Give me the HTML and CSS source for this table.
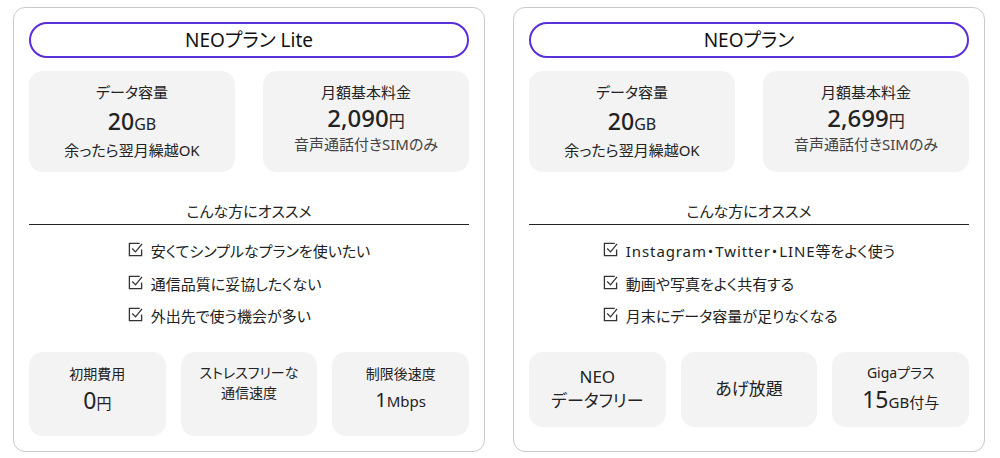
FILE: index.html
```html
<!DOCTYPE html>
<html lang="ja">
<head>
<meta charset="utf-8">
<title>NEOプラン</title>
<link rel="stylesheet" href="styles.css">
</head>
<body>
<svg width="0" height="0" class="defs" aria-hidden="true">
  <symbol id="chk" viewBox="0 0 16 16">
    <path d="M12.5 1.5 H1.5 V14.5 H14.5 V8" fill="none" stroke="#333" stroke-width="1.4"/>
    <path d="M4.5 7 L8 10.5 L15 2" fill="none" stroke="#333" stroke-width="1.4"/>
  </symbol>
</svg>
<main class="plans">
  <section class="card">
    <h2 class="pill">NEOプラン Lite</h2>
    <div class="specs">
      <div class="spec">
        <div class="label">データ容量</div>
        <div class="value"><span class="big">20</span><span class="unit">GB</span></div>
        <div class="sub">余ったら翌月繰越OK</div>
      </div>
      <div class="spec">
        <div class="label">月額基本料金</div>
        <div class="value price"><span class="big">2,090</span><span class="unit">円</span></div>
        <div class="sub gray">音声通話付きSIMのみ</div>
      </div>
    </div>
    <h3 class="rec">こんな方にオススメ</h3>
    <div class="list-wrap">
      <ul class="checks">
        <li><svg class="ico"><use href="#chk"/></svg>安くてシンプルなプランを使いたい</li>
        <li><svg class="ico"><use href="#chk"/></svg>通信品質に妥協したくない</li>
        <li><svg class="ico"><use href="#chk"/></svg>外出先で使う機会が多い</li>
      </ul>
    </div>
    <div class="feats feats-top">
      <div class="feat">
        <div class="flabel">初期費用</div>
        <div class="fvalue"><span class="fbig">0</span><span class="funit">円</span></div>
      </div>
      <div class="feat">
        <div class="ftext">ストレスフリーな</div>
        <div class="ftext">通信速度</div>
      </div>
      <div class="feat">
        <div class="flabel">制限後速度</div>
        <div class="fvalue"><span class="fbig mid">1</span><span class="funit">Mbps</span></div>
      </div>
    </div>
  </section>

  <section class="card">
    <h2 class="pill">NEOプラン</h2>
    <div class="specs">
      <div class="spec">
        <div class="label">データ容量</div>
        <div class="value"><span class="big">20</span><span class="unit">GB</span></div>
        <div class="sub">余ったら翌月繰越OK</div>
      </div>
      <div class="spec">
        <div class="label">月額基本料金</div>
        <div class="value price"><span class="big">2,699</span><span class="unit">円</span></div>
        <div class="sub gray">音声通話付きSIMのみ</div>
      </div>
    </div>
    <h3 class="rec">こんな方にオススメ</h3>
    <div class="list-wrap">
      <ul class="checks">
        <li><svg class="ico"><use href="#chk"/></svg><span class="latin">Instagram・Twitter・LINE</span>等をよく使う</li>
        <li><svg class="ico"><use href="#chk"/></svg>動画や写真をよく共有する</li>
        <li><svg class="ico"><use href="#chk"/></svg>月末にデータ容量が足りなくなる</li>
      </ul>
    </div>
    <div class="feats feats-mid">
      <div class="feat">
        <div class="ftitle">NEO</div>
        <div class="ftitle">データフリー</div>
      </div>
      <div class="feat">
        <div class="ftitle">あげ放題</div>
      </div>
      <div class="feat">
        <div class="flabel">Gigaプラス</div>
        <div class="fvalue"><span class="fbig">15</span><span class="funit">GB付与</span></div>
      </div>
    </div>
  </section>
</main>
</body>
</html>
```

FILE: styles.css
```css
* { box-sizing: border-box; }
html, body { margin: 0; padding: 0; background: #fff; }
body {
  font-family: "Noto Sans", "Noto Sans CJK JP", sans-serif;
  font-feature-settings: "palt";
  color: #222;
  width: 1000px;
  height: 458px;
  overflow: hidden;
}
.defs { position: absolute; }
.plans {
  display: flex;
  gap: 28px;
  padding: 7px 0 0 13px;
}
.card {
  width: 472px;
  height: 445px;
  border: 1px solid #c9c9c9;
  border-radius: 12px;
  padding: 14px 15px 0;
  display: flex;
  flex-direction: column;
}
.pill {
  margin: 0;
  height: 36px;
  border: 2px solid #5a2ed8;
  border-radius: 18px;
  font-size: 19px;
  font-weight: 400;
  line-height: 32px;
  text-align: center;
  color: #111;
}
.specs {
  display: grid;
  grid-template-columns: 206px 206px;
  justify-content: space-between;
  margin-top: 13px;
}
.spec {
  height: 101px;
  background: #f3f3f3;
  border-radius: 14px;
  display: flex;
  flex-direction: column;
  align-items: center;
  padding-top: 10px;
}
.label { font-size: 15px; line-height: 22px; }
.value { line-height: 36px; height: 36px; }
.value.price { line-height: 30px; height: 30px; }
.big { font-size: 23px; font-weight: 500; }
.price .big { font-size: 24px; }
.unit { font-size: 16px; }
.sub { font-size: 15px; line-height: 22px; }
.sub.gray { color: #444; }
.rec {
  margin: 28px 0 0;
  font-size: 15px;
  font-weight: 400;
  line-height: 22px;
  text-align: center;
  padding-bottom: 2px;
  border-bottom: 1.5px solid #222;
}
.list-wrap {
  display: flex;
  justify-content: center;
  margin-top: 10px;
}
.checks {
  list-style: none;
  margin: 0;
  padding: 0;
}
.checks li {
  display: flex;
  align-items: center;
  font-size: 15px;
  line-height: 32.5px;
  height: 32.5px;
}
.latin { letter-spacing: 0.9px; }
.ico {
  width: 15px;
  height: 15px;
  margin-right: 8px;
  margin-top: -3px;
  flex: none;
}
.feats {
  display: grid;
  grid-template-columns: repeat(3, 1fr);
  gap: 15px;
  margin-top: 19px;
}
.feat {
  background: #f3f3f3;
  border-radius: 14px;
  display: flex;
  flex-direction: column;
  align-items: center;
  text-align: center;
}
.feats-top .feat { height: 84px; padding-top: 11px; }
.feats-mid .feat { height: 75px; justify-content: center; }
.flabel { font-size: 14px; line-height: 22px; }
.fvalue { line-height: 30px; }
.fbig { font-size: 23px; }
.fbig.mid { font-size: 20px; }
.funit { font-size: 15px; }
.ftext { font-size: 14px; line-height: 20px; }
.ftitle { font-size: 17px; line-height: 24px; }
```
